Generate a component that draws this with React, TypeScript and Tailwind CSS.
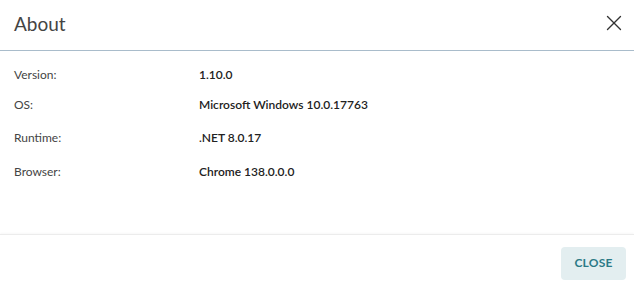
import { X } from 'lucide-react'

const rows = [
  { label: 'Version:', value: '1.10.0', h: 'h-[28px]' },
  { label: 'OS:', value: 'Microsoft Windows 10.0.17763', h: 'h-[32px]' },
  { label: 'Runtime:', value: '.NET 8.0.17', h: 'h-[34px]' },
  { label: 'Browser:', value: 'Chrome 138.0.0.0', h: 'h-[34px]' },
]

export default function App() {
  return (
    <div
      className="flex h-[291px] w-[634px] flex-col bg-white text-[#333]"
      style={{ fontFamily: 'Lato, "Noto Sans", sans-serif' }}
    >
      <div className="flex h-[51px] items-center justify-between border-b border-[#a9bccb] pl-[14px] pr-[7px]">
        <h1 className="pb-[2px] text-[19px] font-normal text-[#444]">About</h1>
        <button type="button" aria-label="Close" className="mb-[4px] text-[#333]">
          <X size={26} strokeWidth={1.25} />
        </button>
      </div>

      <div className="flex-1 pt-[10px]">
        {rows.map((r) => (
          <div key={r.label} className={`grid grid-cols-[185px_1fr] items-center px-[14px] ${r.h}`}>
            <span className="text-[12px] text-[#444]">{r.label}</span>
            <span className="text-[12px] font-semibold text-[#222]">{r.value}</span>
          </div>
        ))}
      </div>

      <div className="flex h-[57px] items-center justify-end border-t border-[#ececec] px-[8px] shadow-[0_-1px_2px_rgba(0,0,0,0.03)]">
        <button
          type="button"
          className="h-[33px] w-[65px] rounded-[4px] bg-[#e3eef0] text-[12px] font-bold tracking-[0.2px] text-[#2b7a86]"
        >
          CLOSE
        </button>
      </div>
    </div>
  )
}
